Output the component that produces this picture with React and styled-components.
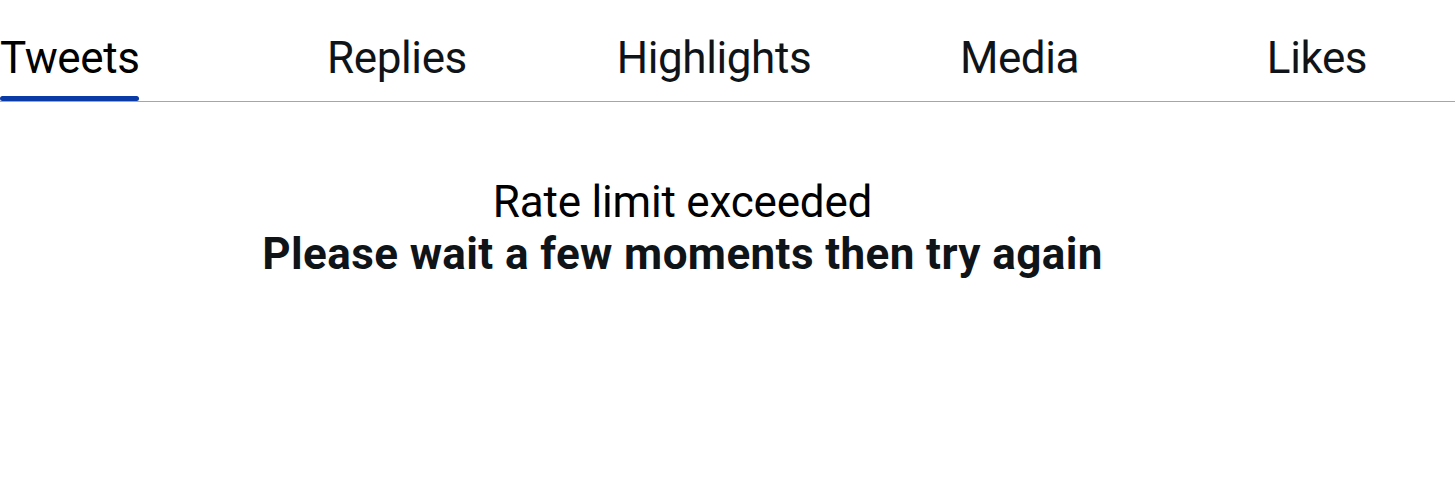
import React from "react";
import styled, { createGlobalStyle } from "styled-components";

const GlobalStyle = createGlobalStyle`
  html, body {
    margin: 0;
    padding: 0;
    background: #fff;
  }
  body {
    font-family: Roboto, "Liberation Sans", sans-serif;
  }
`;

const Page = styled.div`
  width: 1455px;
  height: 484px;
  overflow: hidden;
  background: #fff;
`;

const TabBar = styled.nav`
  display: flex;
  height: 101px;
  border-bottom: 1px solid #a3a7a8;
`;

const Tab = styled.div`
  display: flex;
  justify-content: ${(p) => (p.$align === "left" ? "flex-start" : "center")};
  width: ${(p) => p.$width}px;
  flex: none;
`;

const TabLabel = styled.span`
  position: relative;
  display: inline-block;
  padding-top: 28px;
  font-size: 44px;
  letter-spacing: -0.4px;
  line-height: 60px;
  color: ${(p) => (p.$active ? "#000" : "#0f1419")};
`;

const Indicator = styled.span`
  position: absolute;
  left: 0;
  right: 0;
  bottom: 0;
  height: 5px;
  border-radius: 3px;
  background: #0a3aa6;
`;

const Message = styled.div`
  width: 1365px;
  display: flex;
  flex-direction: column;
  align-items: center;
  padding-top: 74px;
`;

const Title = styled.div`
  font-size: 44px;
  letter-spacing: -0.2px;
  line-height: 52px;
  color: #000;
`;

const Subtitle = styled.div`
  font-size: 44px;
  font-weight: 700;
  letter-spacing: 0.4px;
  line-height: 52px;
  color: #0f1419;
`;

const tabs = [
  { label: "Tweets", width: 233, align: "left", active: true },
  { label: "Replies", width: 328 },
  { label: "Highlights", width: 306 },
  { label: "Media", width: 305 },
  { label: "Likes", width: 290 },
];

export default function App() {
  return (
    <Page>
      <GlobalStyle />
      <TabBar>
        {tabs.map((t) => (
          <Tab key={t.label} $width={t.width} $align={t.align}>
            <TabLabel $active={t.active}>
              {t.label}
              {t.active && <Indicator />}
            </TabLabel>
          </Tab>
        ))}
      </TabBar>
      <Message>
        <Title>Rate limit exceeded</Title>
        <Subtitle>Please wait a few moments then try again</Subtitle>
      </Message>
    </Page>
  );
}
